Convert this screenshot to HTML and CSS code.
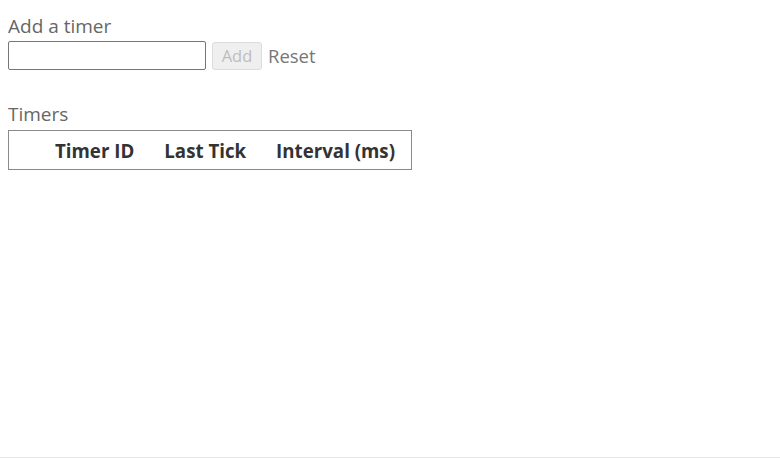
FILE: index.html
```html
<!DOCTYPE html>
<html>
<head>
<meta charset="utf-8">
<link rel="stylesheet" href="styles.css">
</head>
<body>
<div class="page">
  <section class="add">
    <div class="title">Add a timer</div>
    <div class="row">
      <input class="field" type="text">
      <button class="btn-add" disabled>Add</button>
      <button class="btn-reset">Reset</button>
    </div>
  </section>
  <section class="timers">
    <div class="title">Timers</div>
    <table class="grid">
      <thead>
        <tr>
          <th class="c0"></th>
          <th>Timer ID</th>
          <th>Last Tick</th>
          <th>Interval (ms)</th>
        </tr>
      </thead>
    </table>
  </section>
</div>
</body>
</html>
```

FILE: styles.css
```css
html, body {
  margin: 0;
  height: 100%;
  background: #fff;
}
body {
  font-family: "Open Sans", "Noto Sans", sans-serif;
  font-size: 19px;
  color: #666;
  box-sizing: border-box;
  border-bottom: 1px solid #e6e6e6;
}
.page {
  padding: 15px 8px 0 8px;
}
.title {
  line-height: 22px;
  color: #666;
}
.row {
  display: flex;
  align-items: center;
  gap: 6px;
  margin-top: 4px;
}
.field {
  width: 198px;
  height: 29px;
  box-sizing: border-box;
  border: 1px solid #767676;
  border-radius: 2px;
  margin: 0;
  padding: 0 4px;
}
.btn-add {
  width: 50px;
  height: 28px;
  box-sizing: border-box;
  background: #efefef;
  border: 1px solid #dcdcdc;
  border-radius: 3px;
  color: #bdbdbd;
  font: inherit;
  font-size: 16.5px;
  padding: 0;
}
.btn-reset {
  background: none;
  border: none;
  padding: 0;
  font: inherit;
  color: #777;
  font-size: 18.5px;
}
.timers {
  margin-top: 33px;
}
.grid {
  margin-top: 5px;
  border: 1px solid #8a8a8a;
  border-collapse: collapse;
}
.grid th {
  font-weight: bold;
  color: #333;
  font-size: 18.7px;
  height: 38px;
  padding: 0 15px;
  text-align: center;
}
.grid th.c0 {
  width: 31px;
  padding: 0;
}
.grid th:last-child {
  padding-right: 16px;
}
```
